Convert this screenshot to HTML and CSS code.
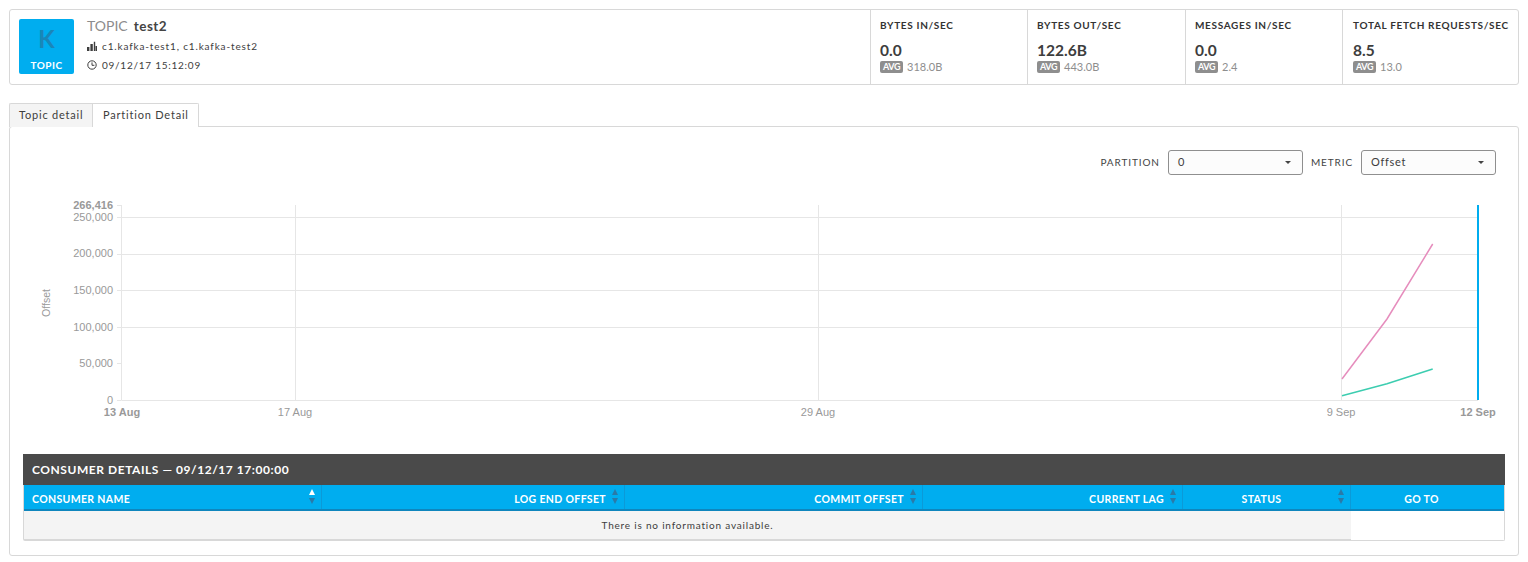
FILE: index.html
```html
<!DOCTYPE html>
<html lang="en">
<head>
<meta charset="utf-8">
<title>Topic test2</title>
<link rel="stylesheet" href="styles.css">
</head>
<body>
<header class="summary">
  <div class="identity">
    <div class="tile"><span class="tile-letter">K</span><span class="tile-label">TOPIC</span></div>
    <div class="meta">
      <div class="meta-title"><span class="meta-kind">TOPIC</span><strong class="meta-name">test2</strong></div>
      <div class="meta-line meta-hosts">
        <svg class="ico" viewBox="0 0 10 10"><path d="M0 6h2.400v4H0zM3.400 3h2.400v7H3.400zM6.800 0.800h1.400v9.200H6.800zM8.600 5h1.400v5H8.600z" fill="#3d3d3d"/></svg>
        <span>c1.kafka-test1, c1.kafka-test2</span>
      </div>
      <div class="meta-line">
        <svg class="ico" viewBox="0 0 10 10"><circle cx="5" cy="5" r="4.200" fill="none" stroke="#3d3d3d" stroke-width="1"/><path d="M5 2.400V5.300H7.400" fill="none" stroke="#3d3d3d" stroke-width="1"/></svg>
        <span>09/12/17 15:12:09</span>
      </div>
    </div>
  </div>
  <div class="stat stat-a"><div class="stat-label">BYTES IN/SEC</div><div class="stat-value">0.0</div><div class="stat-avg"><span class="avg">AVG</span>318.0B</div></div>
  <div class="stat stat-b"><div class="stat-label">BYTES OUT/SEC</div><div class="stat-value">122.6B</div><div class="stat-avg"><span class="avg">AVG</span>443.0B</div></div>
  <div class="stat stat-c"><div class="stat-label">MESSAGES IN/SEC</div><div class="stat-value">0.0</div><div class="stat-avg"><span class="avg">AVG</span>2.4</div></div>
  <div class="stat stat-d"><div class="stat-label">TOTAL FETCH REQUESTS/SEC</div><div class="stat-value">8.5</div><div class="stat-avg"><span class="avg">AVG</span>13.0</div></div>
</header>

<nav class="tabs">
  <div class="tab tab-active">Topic detail</div>
  <div class="tab">Partition Detail</div>
</nav>

<main class="panel">
  <div class="filters">
    <span class="filter-label">PARTITION</span>
    <div class="select"><span>0</span><i class="caret"></i></div>
    <span class="filter-label">METRIC</span>
    <div class="select"><span>Offset</span><i class="caret"></i></div>
  </div>

  <svg class="chart" width="1496" height="240" viewBox="10 0 1496 240">
    <g class="grid">
      <path d="M121.500 18.500H1478M121.500 55.500H1478M121.500 91.500H1478M121.500 128.500H1478M121.500 201.500H1478"/>
      <path d="M121.500 6V201M295.500 6V201M818.500 6V201M1341.500 6V201"/>
      <path d="M117 6.500H121.500M117 18.500H121.500M117 55.500H121.500M117 91.500H121.500M117 128.500H121.500M117 164.500H121.500M117 201.500H121.500"/>
    </g>
    <g class="ylabels">
      <text class="strong" x="113" y="10">266,416</text>
      <text x="113" y="22">250,000</text>
      <text x="113" y="58">200,000</text>
      <text x="113" y="95">150,000</text>
      <text x="113" y="132">100,000</text>
      <text x="113" y="168">50,000</text>
      <text x="113" y="205">0</text>
    </g>
    <text class="axis-title" transform="translate(50 104) rotate(-90)">Offset</text>
    <g class="xlabels">
      <text class="strong" x="122" y="217">13 Aug</text>
      <text x="295" y="217">17 Aug</text>
      <text x="818" y="217">29 Aug</text>
      <text x="1341" y="217">9 Sep</text>
      <text class="strong" x="1478" y="217">12 Sep</text>
    </g>
    <path class="line-pink" d="M1342 180 1387 120 1432.700 45"/>
    <path class="line-teal" d="M1342 196.700 1387 184.700 1432.700 170"/>
    <path class="line-blue" d="M1478 6V201"/>
  </svg>

  <section class="consumers">
    <h2 class="consumers-title">CONSUMER DETAILS — 09/12/17 17:00:00</h2>
    <div class="table">
      <div class="thead">
        <div class="th col-1 left">CONSUMER NAME<span class="sort sort-up"></span></div>
        <div class="th col-2 right">LOG END OFFSET<span class="sort"></span></div>
        <div class="th col-3 right">COMMIT OFFSET<span class="sort"></span></div>
        <div class="th col-4 right">CURRENT LAG<span class="sort"></span></div>
        <div class="th col-5 center">STATUS<span class="sort"></span></div>
        <div class="th col-6 center">GO TO</div>
      </div>
      <div class="empty">There is no information available.</div>
    </div>
  </section>
</main>
</body>
</html>
```
FILE: styles.css
```css
* { box-sizing: border-box; }
html, body { margin: 0; padding: 0; }
body {
  width: 1528px;
  height: 562px;
  padding: 9px 9px 0 9px;
  background: #fff;
  font-family: Lato, "Liberation Sans", sans-serif;
  color: #3d3d3d;
  overflow: hidden;
}

.summary {
  display: flex;
  width: 1510px;
  height: 76px;
  border: 1px solid #d8d8d8;
  border-radius: 3px;
}
.identity { display: flex; width: 860px; padding: 9px 0 0 9px; }
.tile {
  width: 55px;
  height: 55px;
  background: #00adef;
  border-radius: 2px;
  display: flex;
  flex-direction: column;
  align-items: center;
}
.tile-letter { margin-top: 7px; font-size: 24px; line-height: 26px; font-weight: 700; color: #1a86b8; }
.tile-label { margin-top: 7px; font-size: 10px; line-height: 12px; font-weight: 700; color: #fff; letter-spacing: 0.5px; }
.meta { margin-left: 13px; }
.meta-title { margin-top: -4px; height: 20px; line-height: 20px; white-space: nowrap; }
.meta-kind { font-size: 14px; color: #8c8c8c; }
.meta-name { margin-left: 6px; font-size: 13.500px; font-weight: 700; letter-spacing: 0.5px; color: #444; }
.meta-line { display: flex; align-items: center; height: 19px; font-size: 10px; letter-spacing: 0.75px; white-space: nowrap; }
.meta-hosts { margin-top: 1px; letter-spacing: 0.85px; }
.ico { width: 10px; height: 10px; margin-right: 5px; flex: none; }

.stat { border-left: 1px solid #d8d8d8; padding: 8px 0 0 9px; white-space: nowrap; }
.stat-a { width: 157px; }
.stat-b { width: 158px; }
.stat-c { width: 157px; }
.stat-d { width: 176px; padding-left: 10px; }
.stat-label { font-size: 10px; line-height: 14px; font-weight: 700; letter-spacing: 0.67px; color: #333; }
.stat-value { margin-top: 8px; font-size: 15.500px; line-height: 20px; font-weight: 700; color: #3d3d3d; }
.stat-avg { margin-top: 1px; display: flex; align-items: center; font-size: 11px; line-height: 12px; color: #8e8e8e; }
.avg {
  margin-right: 4px;
  padding: 0 3px;
  height: 12px;
  line-height: 12px;
  background: #8e8e8e;
  border-radius: 2px;
  color: #fff;
  font-size: 9px;
  font-weight: 700;
  letter-spacing: -0.4px;
}

.tabs { display: flex; margin-top: 18px; height: 24px; position: relative; z-index: 1; }
.tab {
  height: 24px;
  padding: 0 9px 0 10px;
  border: 1px solid #d8d8d8;
  border-bottom: 0;
  font-size: 11px;
  line-height: 21px;
  letter-spacing: 0.8px;
  background: #fff;
  white-space: nowrap;
}
.tab-active { width: 83px; padding: 0 0 0 9px; background: #f4f4f4; border-right: 0; border-radius: 2px 0 0 0; }
.tab:last-child { width: 107px; border-radius: 0 2px 0 0; }

.panel {
  width: 1510px;
  height: 430px;
  margin-top: -1px;
  border: 1px solid #d8d8d8;
  border-radius: 3px;
}
.filters { display: flex; justify-content: flex-end; align-items: center; height: 25px; margin: 23px 22px 0 0; }
.filter-label { padding-bottom: 2px; font-size: 10px; letter-spacing: 0.9px; color: #444; }
.filters .select { margin-left: 8px; }
.select + .filter-label { margin-left: 8px; }
.select {
  display: flex;
  align-items: center;
  justify-content: space-between;
  width: 135px;
  height: 25px;
  padding: 0 11px 2px 9px;
  border: 1px solid #8f8f8f;
  border-radius: 3px;
  background: #fcfcfc;
  font-size: 11px;
  letter-spacing: 0.7px;
}
.caret { width: 0; height: 0; margin-top: 2px; border: 3px solid transparent; border-top: 3px solid #444; border-bottom: 0; }

.chart { display: block; margin-top: 24px; }
.grid path { fill: none; stroke: #e6e6e6; stroke-width: 1; }
.ylabels text { font-family: "Liberation Sans", Arial, sans-serif; font-size: 11px; fill: #999; text-anchor: end; }
.xlabels text { font-family: "Liberation Sans", Arial, sans-serif; font-size: 11px; fill: #999; text-anchor: middle; }
.strong { font-weight: 700; }
.axis-title { font-family: "Liberation Sans", Arial, sans-serif; font-size: 10.500px; fill: #999; text-anchor: middle; }
.line-pink { fill: none; stroke: #e68dbd; stroke-width: 1.500; }
.line-teal { fill: none; stroke: #3ccdb0; stroke-width: 1.500; }
.line-blue { fill: none; stroke: #00adef; stroke-width: 2; }

.consumers { width: 1482px; margin: 15px 0 0 13px; }
.consumers-title {
  margin: 0;
  height: 31px;
  padding-left: 9px;
  background: #4a4a4a;
  color: #fff;
  font-size: 12px;
  line-height: 31px;
  font-weight: 700;
  letter-spacing: 0.55px;
}
.table { width: 1482px; height: 56px; border: 1px solid #d8d8d8; border-top: 0; border-radius: 0 0 2px 2px; }
.thead { display: flex; height: 26px; background: #00adef; border-bottom: 2px solid #0f86bd; }
.th {
  position: relative;
  height: 24px;
  border-right: 1px solid #0b9ad8;
  color: #fff;
  font-size: 10.500px;
  line-height: 28px;
  font-weight: 700;
  letter-spacing: 0.35px;
  white-space: nowrap;
}
.th:last-child { border-right: 0; }
.left { padding-left: 8px; }
.right { text-align: right; padding-right: 18px; }
.center { text-align: center; }
.col-1 { width: 298px; }
.col-2 { width: 303px; }
.col-3 { width: 298px; }
.col-4 { width: 260px; }
.col-5 { width: 168px; padding-right: 10px; }
.col-6 { width: 153px; padding-right: 12px; }
.sort { position: absolute; right: 5px; top: 4px; width: 7px; height: 15px; }
.sort::before, .sort::after { content: ""; position: absolute; left: 0; width: 0; height: 0; border-left: 3.500px solid transparent; border-right: 3.500px solid transparent; }
.sort::before { top: 0; border-bottom: 6px solid #2a7aa8; }
.sort::after { bottom: 0; border-top: 6px solid #2a7aa8; }
.sort-up::before { border-bottom-color: #fff; }

.empty {
  width: 1327px;
  height: 29px;
  background: #f4f4f4;
  border-bottom: 1px solid #d8d8d8;
  text-align: center;
  font-size: 10px;
  line-height: 28px;
  letter-spacing: 0.8px;
  color: #3d3d3d;
}
```
